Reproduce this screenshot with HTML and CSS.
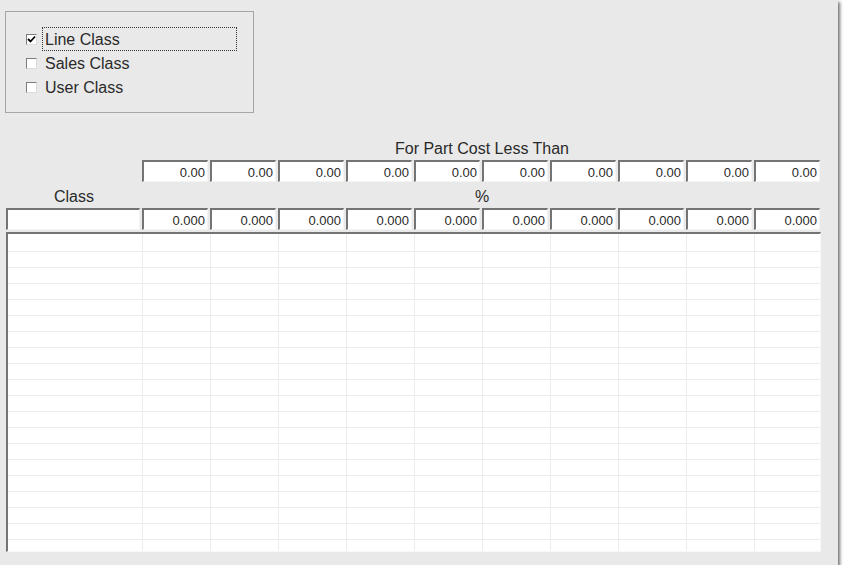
FILE: index.html
```html
<!DOCTYPE html>
<html lang="en">
<head>
  <meta charset="UTF-8">
  <title>Part Cost Markup</title>
  <link rel="stylesheet" href="styles.css">
</head>
<body>
  <div class="window">
    <div class="group">
      <label class="opt">
        <span class="box"><svg width="9" height="9" viewBox="0 0 9 9"><path d="M1 4 L3.5 6.5 L8 1.5" fill="none" stroke="#000" stroke-width="1.8"/></svg></span>
        <span class="caption focus">Line Class</span>
      </label>
      <label class="opt">
        <span class="box"></span>
        <span class="caption">Sales Class</span>
      </label>
      <label class="opt">
        <span class="box"></span>
        <span class="caption">User Class</span>
      </label>
    </div>

    <div class="rates">
      <div class="heading span-costs">For Part Cost Less Than</div>

      <div class="blank"></div>
      <input class="field num" value="0.00" readonly>
      <input class="field num" value="0.00" readonly>
      <input class="field num" value="0.00" readonly>
      <input class="field num" value="0.00" readonly>
      <input class="field num" value="0.00" readonly>
      <input class="field num" value="0.00" readonly>
      <input class="field num" value="0.00" readonly>
      <input class="field num" value="0.00" readonly>
      <input class="field num" value="0.00" readonly>
      <input class="field num" value="0.00" readonly>

      <div class="heading label">Class</div>
      <div class="heading label span-costs">%</div>

      <input class="field class-field" value="" readonly>
      <input class="field num" value="0.000" readonly>
      <input class="field num" value="0.000" readonly>
      <input class="field num" value="0.000" readonly>
      <input class="field num" value="0.000" readonly>
      <input class="field num" value="0.000" readonly>
      <input class="field num" value="0.000" readonly>
      <input class="field num" value="0.000" readonly>
      <input class="field num" value="0.000" readonly>
      <input class="field num" value="0.000" readonly>
      <input class="field num" value="0.000" readonly>

      <div class="sheet">
        <div class="col"></div>
        <div class="col"></div>
        <div class="col"></div>
        <div class="col"></div>
        <div class="col"></div>
        <div class="col"></div>
        <div class="col"></div>
        <div class="col"></div>
        <div class="col"></div>
        <div class="col"></div>
        <div class="col last"></div>
      </div>
    </div>
  </div>
</body>
</html>
```

FILE: styles.css
```css
* {
  box-sizing: border-box;
}
body {
  margin: 0;
  background: #fff;
  font-family: "Liberation Sans", Arial, sans-serif;
  color: #2a2a2a;
}
.window {
  width: 838px;
  height: 565px;
  background: #e9e9e9;
  padding-top: 11px;
  box-shadow: 2px 2px 3px rgba(0,0,0,0.55);
}
.group {
  margin-left: 5px;
  width: 249px;
  height: 102px;
  border: 1px solid #a6a6a6;
  padding: 15px 0 0 20px;
}
.opt {
  display: flex;
  align-items: center;
  height: 24px;
  font-size: 16px;
}
.box {
  width: 11px;
  height: 11px;
  background: #fff;
  border-style: solid;
  border-width: 1px;
  border-color: #7d7d7d #dcdcdc #dcdcdc #7d7d7d;
  margin-right: 5px;
  display: flex;
  align-items: center;
  justify-content: center;
}
.caption {
  width: 195px;
  height: 24px;
  line-height: 23px;
  padding-left: 2px;
  border: 1px dotted transparent;
}
.caption.focus {
  border-color: #333;
}
.rates {
  margin: 25px 0 0 6px;
  display: grid;
  grid-template-columns: 136px repeat(10, 68px);
  grid-template-rows: 22px 22px 26px 22px auto;
}
.heading {
  font-size: 16px;
  line-height: 20px;
  padding-top: 1px;
  text-align: center;
}
.span-costs {
  grid-column: 2 / -1;
}
.label {
  line-height: 26px;
  padding-top: 2px;
}
.field {
  height: 22px;
  width: 66px;
  margin: 0;
  background: #fff;
  border-style: solid;
  border-width: 2px 1px 1px 2px;
  border-color: #747474 #f4f4f4 #f4f4f4 #747474;
  font-family: "Liberation Sans", Arial, sans-serif;
  font-size: 13px;
  color: #2a2a2a;
  padding: 1px 2px 0;
  outline: none;
}
.num {
  text-align: right;
}
.class-field {
  width: 134px;
}
.sheet {
  grid-column: 1 / -1;
  margin-top: 2px;
  width: 815px;
  height: 320px;
  background: #fff;
  border-style: solid;
  border-width: 2px 1px 1px 2px;
  border-color: #747474 #f8f8f8 #f8f8f8 #747474;
  display: grid;
  grid-template-columns: 135px repeat(9, 68px) 1fr;
}
.col {
  border-right: 1px solid #ececec;
  background: repeating-linear-gradient(to bottom, transparent 0 15px, #ececec 15px 16px);
  background-position: 0 2px;
}
.col.last {
  border-right: none;
}
```
